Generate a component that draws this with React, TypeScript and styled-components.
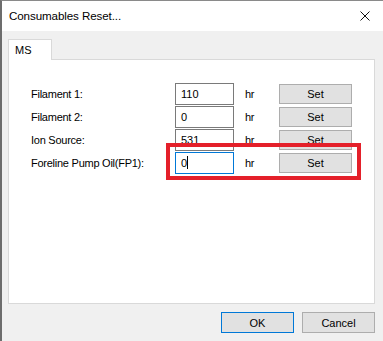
import React from 'react';
import styled, { createGlobalStyle } from 'styled-components';

const GlobalStyle = createGlobalStyle`
  html, body {
    margin: 0;
    padding: 0;
    background: #f0f0f0;
  }
  * {
    box-sizing: border-box;
  }
`;

const Window = styled.div`
  position: relative;
  width: 383px;
  height: 341px;
  border-left: 2px solid #6d6d6d;
  border-top: 1px solid #8a8a8a;
  background: #f0f0f0;
  font-family: "Liberation Sans", Arial, sans-serif;
  color: #000;
  overflow: hidden;
`;

const TitleBar = styled.div`
  height: 30px;
  background: #fff;
  display: flex;
  align-items: center;
  justify-content: space-between;
  padding: 0 9px 1px 7px;
`;

const Title = styled.span`
  font-size: 11.6px;
  letter-spacing: -0.1px;
`;

const CloseIcon = styled.svg`
  width: 10px;
  height: 10px;
  margin-right: 4px;
`;

const Body = styled.div`
  padding: 8px 6px 0 6px;
`;

const TabStrip = styled.div`
  display: flex;
  height: 20px;
`;

const Tab = styled.div`
  width: 44px;
  height: 21px;
  background: #fff;
  border: 1px solid #d9d9d9;
  border-bottom: none;
  font-size: 11px;
  padding: 4px 0 0 6px;
  position: relative;
  z-index: 1;
`;

const Panel = styled.div`
  height: 245px;
  width: 367px;
  background: #fff;
  border: 1px solid #d9d9d9;
  padding: 22px 0 0 22px;
`;

const Form = styled.div`
  display: grid;
  grid-template-columns: 144px 59px 45px 73px;
  grid-auto-rows: 23px;
  align-items: center;
  font-size: 11px;
  letter-spacing: -0.25px;
`;

const Label = styled.span`
  padding-top: 1px;
`;

const Field = styled.div<{ $focused?: boolean }>`
  height: 22px;
  border: 1px solid ${p => (p.$focused ? '#0078d7' : '#7a7a7a')};
  display: flex;
  align-items: center;
  padding-left: 5px;
  font-size: 11px;
  letter-spacing: 0;
`;

const Caret = styled.span`
  display: inline-block;
  width: 1px;
  height: 13px;
  background: #000;
`;

const Unit = styled.span`
  padding-left: 11px;
  padding-top: 1px;
`;

const Button = styled.div<{ $default?: boolean }>`
  width: 73px;
  height: 20px;
  background: #e1e1e1;
  border: 1px solid ${p => (p.$default ? '#0078d7' : '#adadad')};
  display: flex;
  align-items: center;
  justify-content: center;
  font-size: 11px;
  letter-spacing: 0;
`;

const Footer = styled.div`
  display: flex;
  justify-content: flex-end;
  gap: 8px;
  padding: 8px 2px 0 0;
`;

const DialogButton = styled(Button)`
  height: 21px;
  flex-shrink: 0;
`;

const Highlight = styled.div`
  position: absolute;
  left: 164px;
  top: 142px;
  width: 195px;
  height: 37px;
  border: 4px solid #e4202a;
  pointer-events: none;
`;

const rows = [
  { label: 'Filament 1:', value: '110' },
  { label: 'Filament 2:', value: '0' },
  { label: 'Ion Source:', value: '531' },
  { label: 'Foreline Pump Oil(FP1):', value: '0', focused: true },
];

export default function App() {
  return (
    <>
      <GlobalStyle />
      <Window>
        <TitleBar>
          <Title>Consumables Reset...</Title>
          <CloseIcon viewBox="0 0 10 10">
            <path d="M0.5 0.5L9.5 9.5M9.5 0.5L0.5 9.5" stroke="#111" strokeWidth="1" fill="none" />
          </CloseIcon>
        </TitleBar>
        <Body>
          <TabStrip>
            <Tab>MS</Tab>
          </TabStrip>
          <Panel>
            <Form>
              {rows.map(r => (
                <React.Fragment key={r.label}>
                  <Label>{r.label}</Label>
                  <Field $focused={r.focused}>
                    {r.value}
                    {r.focused && <Caret />}
                  </Field>
                  <Unit>hr</Unit>
                  <Button>Set</Button>
                </React.Fragment>
              ))}
            </Form>
          </Panel>
          <Footer>
            <DialogButton $default>OK</DialogButton>
            <DialogButton>Cancel</DialogButton>
          </Footer>
        </Body>
        <Highlight />
      </Window>
    </>
  );
}
